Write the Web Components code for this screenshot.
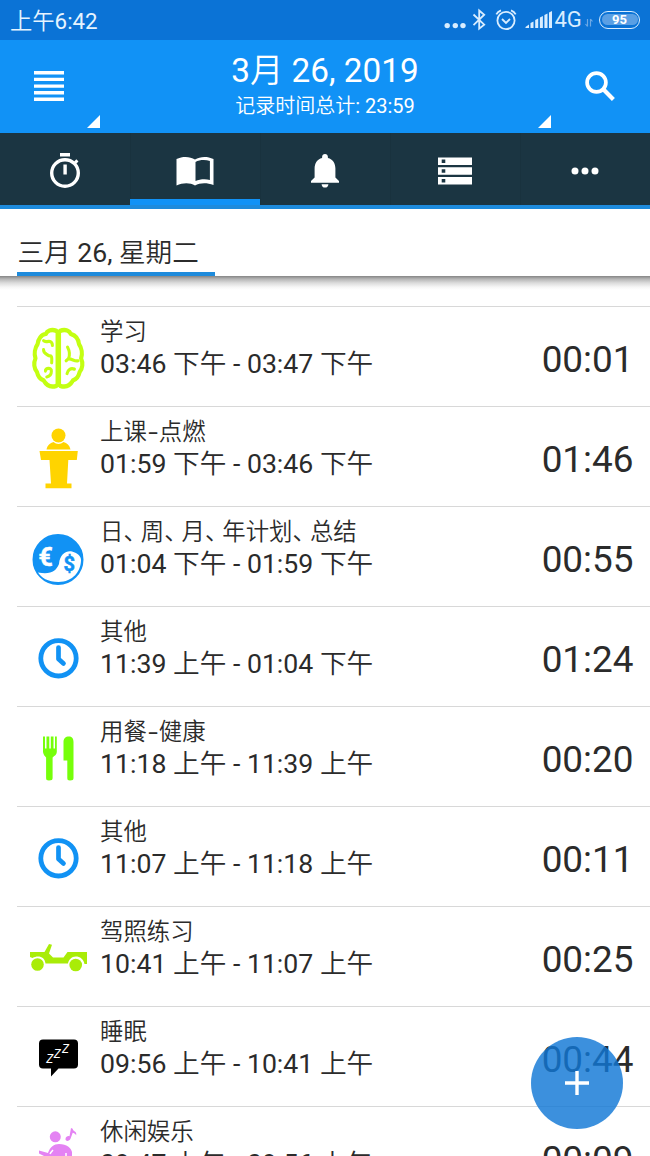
<!DOCTYPE html>
<html lang="zh-CN">
<head>
<meta charset="utf-8">
<title>时间记录</title>
<style>
html,body{margin:0;padding:0}
body{width:650px;height:1156px;overflow:hidden;background:#fff;color:#2b2b2b;font-family:Roboto,"Noto Sans CJK SC",sans-serif}
</style>
</head>
<body>
<time-app></time-app>
<script>
const ICONS = {
  menu: [30, 30, '<path fill="#fff" d="M0 0h30v3.4H0zM0 6.7h30v3.4H0zM0 13.4h30v3.4H0zM0 20h30v3.4H0zM0 26.6h30v3.4H0z"/>'],
  search: [32, 32, '<circle cx="11.500" cy="11.500" r="9.400" fill="none" stroke="#fff" stroke-width="3.700"/><path d="M17.800 17.800L28.400 28.400" stroke="#fff" stroke-width="4.200"/>'],
  corner: [13, 13, '<path fill="#fff" d="M13 0v13H0z"/>'],
  stopwatch: [32, 38, '<path fill="#fff" d="M11 1h10v3.6H11zM14.4 12.5h3.4v10h-3.4z"/><circle cx="16" cy="21" r="13.3" fill="none" stroke="#fff" stroke-width="3.4"/><path d="M25.2 11.6l3.2-3.2" stroke="#fff" stroke-width="3"/>'],
  book: [38, 30, '<path fill="#fff" fill-rule="evenodd" d="M.5 3C7 0 14 .4 19 3.6 24 .4 31 0 37.500 3v26C31 26.600 24 26.600 19 29.500 14 26.600 7 26.600 .5 29.500zM19.500 6v19c4.300-1.800 10-2.200 14.400-1V5c-4.500-1.400-10.500-1.200-14.400 1z"/>'],
  bell: [28, 34, '<path fill="#fff" d="M14 0c1.700 0 2.900 1.300 2.900 3v1c5 1.300 7.500 5.400 7.500 10.500v9L28 27v1.700H0V27l3.600-3.500v-9C3.600 9.400 6.100 5.300 11.100 4V3c0-1.700 1.200-3 2.900-3zM10.600 30.200h6.800c0 2-1.500 3.400-3.400 3.400s-3.400-1.400-3.400-3.400z"/>'],
  list: [34, 28, '<path fill="#fff" fill-rule="evenodd" d="M0 .5h34v7.400H0zM3.700 2.400v3.600h3.600V2.400zM0 10.300h34v7.400H0zM3.700 12.200v3.600h3.600v-3.600zM0 20.100h34v7.400H0zM3.700 22v3.600h3.600V22z"/>'],
  more: [28, 8, '<g fill="#fff"><circle cx="4" cy="4" r="3.500"/><circle cx="14" cy="4" r="3.500"/><circle cx="24" cy="4" r="3.500"/></g>'],
  plus: [24, 24, '<path d="M12 0v24M0 12h24" stroke="#fff" stroke-width="3.400"/>'],
  status: [110, 24, '<g fill="#d9edff"><circle cx="4.200" cy="17.600" r="2.700"/><circle cx="12.300" cy="17.600" r="2.700"/><circle cx="20" cy="17.600" r="2.700"/><path d="M82.500 20H86v-3.500L82.500 19zM87.500 20h3v-6.500l-3 1.500zM92.200 20h3v-9.500l-3 1.500zM96.900 20h3V8l-3 1.500zM101.400 20h3.100V5.500l-3.100 1.500zM106 20h3V3l-3 1.500z"/></g><g fill="none" stroke="#d9edff" stroke-width="1.800"><path d="M30.500 6.500l10.700 10.200-5 4V2.500l5 4.200-10.700 10.400"/><circle cx="63" cy="12.500" r="8.600"/><path d="M59 11l4 4 4-4M53.300 6.400c1-2 2.500-3.300 4.700-4.100M72.700 6.400c-1-2-2.500-3.300-4.700-4.100"/></g>'],
  traffic: [8, 9, '<path d="M2.500 8.500V1M2.500 8.500L.5 6M5.500 8.500V1M5.500 1l2 2.500" fill="none" stroke="#6da9e6" stroke-width="1.200"/>'],
  brain: [60, 66, '<g transform="translate(2.700 .5) scale(.92 .98)" fill="none" stroke="#c3ff12" stroke-linecap="round" stroke-linejoin="round"><path stroke-width="4.500" d="M28 4.500C22 2 17.500 5 16.500 7.500 11.500 8 8 13 7.500 18 4.500 22 3.500 28 5.200 32.500 3 37 3.500 43 6.800 46.500 8 51.500 10.500 54 14 55 17 60 22 62.500 28 60.500M32 4.500C38 2 42.500 5 43.500 7.500 48.500 9 52 13 52.500 18 55.500 22 56.500 28 54.800 32.500 57 37 56.500 43 53.200 46.500 52 51.500 49.500 54 46 55 43 60 38 62.500 32 60.500"/><path stroke-width="6" stroke-linecap="butt" d="M30 4.500v56"/><path stroke-width="3.300" d="M14 14.500c2 2 4 .2 7 .8 2.200.6 2.600 1.600 2.600 4M14 23.500c-.5 4.500 4 4.500 6 6.500 3.500-1 3 3 2.800 7M16 45.500c-.5-3.500 7-4 6.500 0 0 3-2 5.500-5 6M40 21c2.500 4.500 3 8 1 12l-2.500 2M41.500 33c4 0 6 3 10 2M39.500 48c1-4 4-6 8-4.500"/></g>'],
  podium: [60, 66, '<g fill="#ffd400"><circle cx="30.500" cy="9.500" r="7"/><path d="M18.500 23.500c1-4.500 3.500-6.500 7-7.500 3 2.500 7 2.500 10 0 3.500 1 6 3 7 7.500zM11.500 25h38.300l-1 9h-8.500L39 57.500h4.500v4.700h-26v-4.700H23L21.500 34H13z"/></g>'],
  money: [60, 66, '<circle cx="30" cy="33.500" r="24" fill="#1192f4" stroke="#1192f4" stroke-width="3"/><path fill="#fff" d="M10 46.500C23 49 28 45 31 38 32 28 38 24.500 44 25.500c6 1.500 9 5 9 8.500 0 11-8 22-22.500 22C20 56 13 51.500 10 46.500z"/><text x="10.500" y="39.500" font-family="Roboto" font-weight="700" font-size="25" fill="#fff" stroke="#fff" stroke-width=".5">€</text><text x="35.500" y="45" font-family="Roboto" font-weight="700" font-size="20" fill="#1192f4" stroke="#1192f4" stroke-width=".5">$</text>'],
  clock: [60, 66, '<g fill="none" stroke="#1192f4"><circle cx="30.500" cy="32.300" r="17.700" stroke-width="4.800"/><path stroke-width="4.700" stroke-linecap="round" stroke-linejoin="round" d="M30.500 21.500V33l5 4.500"/></g>'],
  food: [60, 66, '<g fill="#76ff0a"><path d="M15 10.500h2v12h1.500v-12h2.800v12h1.500v-12h2.700v12H27v-12h1.800V26c0 2.500-2.500 4-4.200 5.500V52c0 1.800-1 2.500-3.700 2.500-2 0-2.800-.7-2.800-2.500V31.500C16.500 30 15.500 28.500 15 26zM35.500 34.500V16c0-3.500 2-5.500 5.500-5.500s4.500 2.500 4.500 5.500v36c0 1.800-1 2.500-3.500 2.500-2 0-2.700-.7-2.700-2.500V34.500z"/></g>'],
  jeep: [60, 66, '<g fill="#a9ec08"><path d="M2 26h14.500L21 18l3 .8-3 8.700 4 4h10.500l4-5.500H59v12h-2.500c-1-5-4.500-7.500-8.700-7.500s-7.300 3.500-7.800 7H17.500C17 33 14 30.500 10 30.500c-2 0-3.500.5-5.500 1.500L2 31z"/><circle cx="9.500" cy="38.500" r="6.300"/><circle cx="47.700" cy="39" r="6.300"/></g>'],
  sleep: [60, 66, '<path d="M15 13.500h31q4 0 4 4v21q0 4-4 4H30.500L23 50.500v-8h-8q-4 0-4-4v-21q0-4 4-4z"/><g font-family="Roboto" font-style="italic" fill="#fff" font-size="12"><text x="18.300" y="37">Z</text><text x="25.800" y="32">Z</text><text x="34" y="27">Z</text></g>'],
  music: [60, 66, '<g fill="#e483f3"><circle cx="27.300" cy="10.800" r="5.500"/><path d="M11 24.500l9 2.500c2-6 6-9 11-9 8 0 12 4 13 8v20H18V31l-7-3.500z"/><path d="M43 2l1.700.7c.3 3 4.300 2 3.500 6.600-1-2-2.400-2.300-3.500-2.600l-2.200 6.100c-1.300 3-5.500 2.700-5 0 .4-2.200 2.500-3.200 4-2.500z"/></g><path d="M22 28c1-2 2-3 3-4M38 27v10" stroke="#fff" stroke-width="1.500" fill="none"/>']
};

function define(name, css, html, setup) {
  const template = document.createElement('template');
  template.innerHTML = '<style>:host{box-sizing:border-box}' + css + '</style>' + html;
  customElements.define(name, class extends HTMLElement {
    constructor() {
      super();
      this.attachShadow({ mode: 'open' }).append(template.content.cloneNode(true));
    }
    connectedCallback() { if (setup) setup(this, this.shadowRoot); }
  });
}

define('app-icon', ':host{display:block;flex:none}svg{display:block}', '<svg xmlns="http://www.w3.org/2000/svg"></svg>', (host, root) => {
  const [w, h, body] = ICONS[host.getAttribute('name')];
  const svg = root.querySelector('svg');
  svg.setAttribute('width', w);
  svg.setAttribute('height', h);
  svg.setAttribute('viewBox', `0 0 ${w} ${h}`);
  svg.innerHTML = body;
});

define('status-bar', `
:host{display:flex;flex:none;align-items:center;height:40px;padding:0 10px;background:#0b73d6;color:#e6f4ff;font-size:22.300px;line-height:40px}
.clock{flex:1;padding-top:2px}
.clock b{font-weight:350}
.net{width:30px;margin-left:1.500px;margin-right:.5px;font-size:22px;color:#d9edff}
.arrows{margin:5px 6px 0 0}
.battery{box-sizing:border-box;width:41px;height:18px;padding:1.500px;border:1.800px solid #d9edff;border-radius:9px}
.battery span{display:block;height:11.400px;border-radius:6px;background:#5a9fe4;color:#fff;font-size:13px;font-weight:700;line-height:12px;text-align:center}`,
`<span class="clock"><b>上午</b>6:42</span><app-icon name="status"></app-icon><span class="net">4G</span><app-icon class="arrows" name="traffic"></app-icon><div class="battery"><span>95</span></div>`);

define('app-header', `
:host{display:grid;flex:none;grid-template-columns:100px 1fr 100px;height:92.500px;background:#1192f6;color:#fff}
.left{display:flex;flex-direction:column;align-items:flex-end;justify-content:space-between;padding:31px 0 5px}
.left .menu{margin-right:36px}
.mid{text-align:center;position:relative}
.mid app-icon{position:absolute;right:-1px;bottom:5px}
h1{margin:9px 0 0;font-weight:400;font-size:33.300px;line-height:44px}
p{margin:1px 0 0;font-size:20px;line-height:24px;font-weight:400}
.right{display:flex;padding:31px 0 0 35px}`,
`<div class="left"><app-icon class="menu" name="menu"></app-icon><app-icon name="corner"></app-icon></div>
<div class="mid"><h1><slot name="title"></slot></h1><p><slot name="total"></slot></p><app-icon name="corner"></app-icon></div>
<div class="right"><app-icon name="search"></app-icon></div>`);

define('nav-tab', `
:host{display:flex;align-items:center;justify-content:center;height:72.500px;box-shadow:1px 0 #19323e}
:host([active]){background:linear-gradient(#1192f6,#1192f6) bottom/130px 6.500px no-repeat}
div{margin-top:4px}`, '<div></div>', (host, root) => {
  const icon = document.createElement('app-icon');
  icon.setAttribute('name', host.getAttribute('icon'));
  root.querySelector('div').replaceChildren(icon);
});

define('nav-tabs', ':host{display:grid;flex:none;grid-template-columns:repeat(5,130px);height:76.500px;background:#1b3542;border-bottom:4px solid #1e8bdc}', '<slot></slot>');

define('date-heading', `
:host{display:flex;flex:none;height:67px;padding-left:17px;align-items:flex-end;background:#fff}
span{box-sizing:border-box;width:198px;height:49px;padding-left:.5px;border-bottom:4px solid #1e8bdc;font-size:26.600px;line-height:51px;white-space:nowrap}`, '<span><slot></slot></span>');

define('time-entry', `
:host{display:grid;grid-template-columns:83px 1fr auto;height:100px;margin-left:17px;border-top:1px solid #d8d8d8}
.icon{padding:19px 0 0 11px}
.name{margin-top:9px;font-size:23.400px;line-height:32px;font-weight:350;white-space:nowrap}
.range{font-size:26.670px;line-height:32px;white-space:nowrap}
.range b{font-weight:350}
.duration{padding:29px 16.500px 0 0;font-size:36.900px;line-height:48px}`,
`<div class="icon"></div><div><div class="name"><slot></slot></div><div class="range"></div></div><div class="duration"></div>`, (host, root) => {
  const icon = document.createElement('app-icon');
  icon.setAttribute('name', host.getAttribute('icon'));
  root.querySelector('.icon').replaceChildren(icon);
  root.querySelector('.range').innerHTML = host.getAttribute('range').replace(/[上下]午/g, '<b>$&</b>');
  root.querySelector('.duration').textContent = host.getAttribute('duration');
});

define('add-button', ':host{display:grid;place-items:center;width:92px;height:92px;border-radius:50%;background:rgba(17,120,214,.82)}', '<app-icon name="plus"></app-icon>');

define('time-app', `
:host{display:flex;flex-direction:column;width:650px;height:1156px;overflow:hidden;position:relative}
main{padding-top:30px;background:linear-gradient(#858585,#b5b5b5 3px,#dcdcdc 7px,#f6f6f6 11px,#fff 14px) top/100% 14px no-repeat}
b{font-weight:350}
.c{letter-spacing:-6px}
.d{display:inline-block;width:12px;text-align:center;transform:scaleX(1.500);font-weight:400}
add-button{position:absolute;left:531px;top:1037px}`,
`<status-bar></status-bar>
<app-header><span slot="title">3<b>月</b> 26, 2019</span><span slot="total"><b>记录时间总计</b>: 23:59</span></app-header>
<nav-tabs><nav-tab icon="stopwatch"></nav-tab><nav-tab icon="book" active></nav-tab><nav-tab icon="bell"></nav-tab><nav-tab icon="list"></nav-tab><nav-tab icon="more"></nav-tab></nav-tabs>
<date-heading><b>三月</b> 26, <b>星期二</b></date-heading>
<main>
<time-entry icon="brain" range="03:46 下午 - 03:47 下午" duration="00:01">学习</time-entry>
<time-entry icon="podium" range="01:59 下午 - 03:46 下午" duration="01:46">上课<span class="d">-</span>点燃</time-entry>
<time-entry icon="money" range="01:04 下午 - 01:59 下午" duration="00:55">日<span class="c">、</span>周<span class="c">、</span>月<span class="c">、</span>年计划<span class="c">、</span>总结</time-entry>
<time-entry icon="clock" range="11:39 上午 - 01:04 下午" duration="01:24">其他</time-entry>
<time-entry icon="food" range="11:18 上午 - 11:39 上午" duration="00:20">用餐<span class="d">-</span>健康</time-entry>
<time-entry icon="clock" range="11:07 上午 - 11:18 上午" duration="00:11">其他</time-entry>
<time-entry icon="jeep" range="10:41 上午 - 11:07 上午" duration="00:25">驾照练习</time-entry>
<time-entry icon="sleep" range="09:56 上午 - 10:41 上午" duration="00:44">睡眠</time-entry>
<time-entry icon="music" range="09:47 上午 - 09:56 上午" duration="00:09">休闲娱乐</time-entry>
</main>
<add-button></add-button>`);
</script>
</body>
</html>
